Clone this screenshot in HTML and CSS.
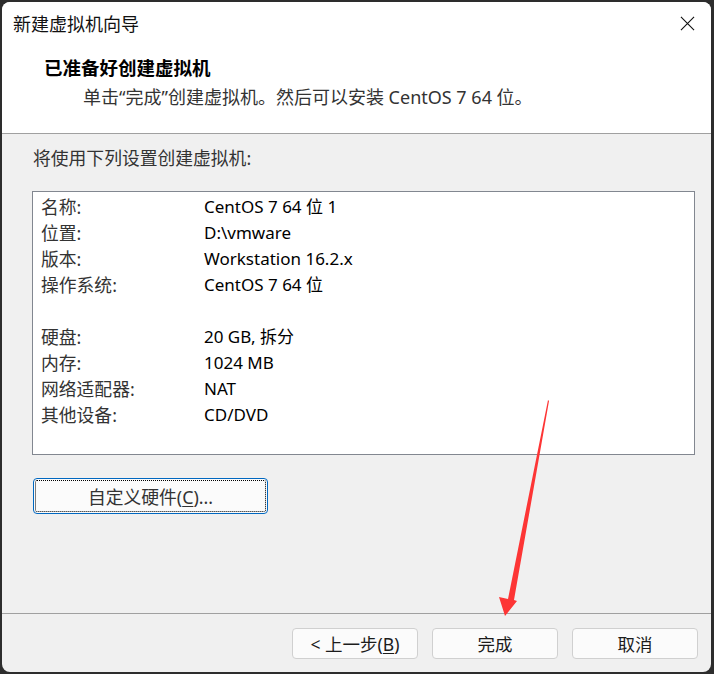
FILE: index.html
```html
<!DOCTYPE html>
<html lang="zh-CN">
<head>
  <meta charset="UTF-8" />
  <title>新建虚拟机向导</title>
  <link rel="stylesheet" href="styles.css">
</head>
<body>
  <div class="window">
    <div class="titlebar">
      <span class="title">新建虚拟机向导</span>
      <svg class="close" width="16" height="16" viewBox="0 0 16 16">
        <path d="M1 1 L15 15 M15 1 L1 15" stroke="#111" stroke-width="1.2" fill="none"/>
      </svg>
    </div>

    <div class="header">
      <h1>已准备好创建虚拟机</h1>
      <p>单击“完成”创建虚拟机。然后可以安装 CentOS 7 64 位。</p>
    </div>

    <div class="content">
      <p class="intro">将使用下列设置创建虚拟机:</p>

      <!-- summary list -->
      <div class="summary">
        <div class="row"><span>名称:</span><span>CentOS 7 64 位 1</span></div>
        <div class="row"><span>位置:</span><span>D:\vmware</span></div>
        <div class="row"><span>版本:</span><span>Workstation 16.2.x</span></div>
        <div class="row"><span>操作系统:</span><span>CentOS 7 64 位</span></div>
        <div class="row"></div>
        <div class="row"><span>硬盘:</span><span>20 GB, 拆分</span></div>
        <div class="row"><span>内存:</span><span>1024 MB</span></div>
        <div class="row"><span>网络适配器:</span><span>NAT</span></div>
        <div class="row"><span>其他设备:</span><span>CD/DVD</span></div>
      </div>

      <button class="btn custom">自定义硬件(<u>C</u>)...</button>
    </div>

    <div class="footer">
      <button class="btn">&lt; 上一步(<u>B</u>)</button>
      <button class="btn">完成</button>
      <button class="btn">取消</button>
    </div>

    <!-- red annotation arrow -->
    <svg class="arrow" width="714" height="674" viewBox="0 0 714 674">
      <polygon points="548,400 549,401 514,600 517,601 505,616 499,597 508,599" fill="#fd3535"/>
    </svg>
  </div>
</body>
</html>
```

FILE: styles.css
```css
* {
  box-sizing: border-box;
}

body {
  margin: 0;
  background: #2d2d2d;
  font-family: "Noto Sans", "Noto Sans CJK SC", sans-serif;
  font-size: 17px;
  color: #1c1c1c;
}

.window {
  position: relative;
  margin: 2px 3px 2px 2px;
  height: 670px;
  background: #f0f0f0;
  border-radius: 8px;
  overflow: hidden;
  display: flex;
  flex-direction: column;
}

.titlebar {
  height: 43px;
  background: #fff;
  display: flex;
  align-items: center;
  justify-content: space-between;
  padding: 0 16px 0 11px;
}

.title {
  font-size: 18px;
  line-height: 24px;
  color: #111;
}

.close {
  width: 15px;
  height: 15px;
}

.header {
  background: #fff;
  height: 89px;
  padding: 11px 0 0 42px;
  border-bottom: 1px solid #a0a0a0;
}

.header h1 {
  margin: 0;
  font-size: 18.5px;
  font-weight: 700;
  line-height: 24px;
  color: #000;
}

.header p {
  margin: 5px 0 0 39px;
  font-size: 18px;
  line-height: 24px;
  color: #333;
}

.content {
  flex: 1;
  padding: 12px 16px 0 30px;
}

.intro {
  margin: 0 0 21px 1px;
  font-size: 17.8px;
  line-height: 24px;
  color: #333;
}

.summary {
  height: 264px;
  background: #fff;
  border: 1px solid #828790;
  padding: 2px 8px;
}

.row {
  display: grid;
  grid-template-columns: 163px 1fr;
  height: 26px;
  line-height: 26px;
}

.row span:first-child {
  font-size: 17.8px;
  color: #333;
}

.row span:last-child {
  color: #000;
}

.btn {
  width: 126px;
  height: 31px;
  background: #fbfbfb;
  border: 1px solid #d0d0d0;
  border-radius: 4px;
  font-family: inherit;
  font-size: 17.5px;
  color: #1c1c1c;
  padding: 0;
}

.btn u {
  text-decoration-thickness: 1px;
  text-underline-offset: 2px;
}

.custom {
  display: block;
  margin: 23px 0 0 1px;
  width: 235px;
  height: 36px;
  border: 1px solid #0067c0;
  outline: 1px dotted #000;
  outline-offset: -3px;
  font-size: 17.8px;
  color: #333;
}

.footer {
  height: 59px;
  border-top: 1px solid #a0a0a0;
  padding: 14px 13px 0 0;
  display: flex;
  justify-content: flex-end;
  gap: 14px;
}

.arrow {
  position: absolute;
  left: -2px;
  top: -2px;
  pointer-events: none;
}
```
